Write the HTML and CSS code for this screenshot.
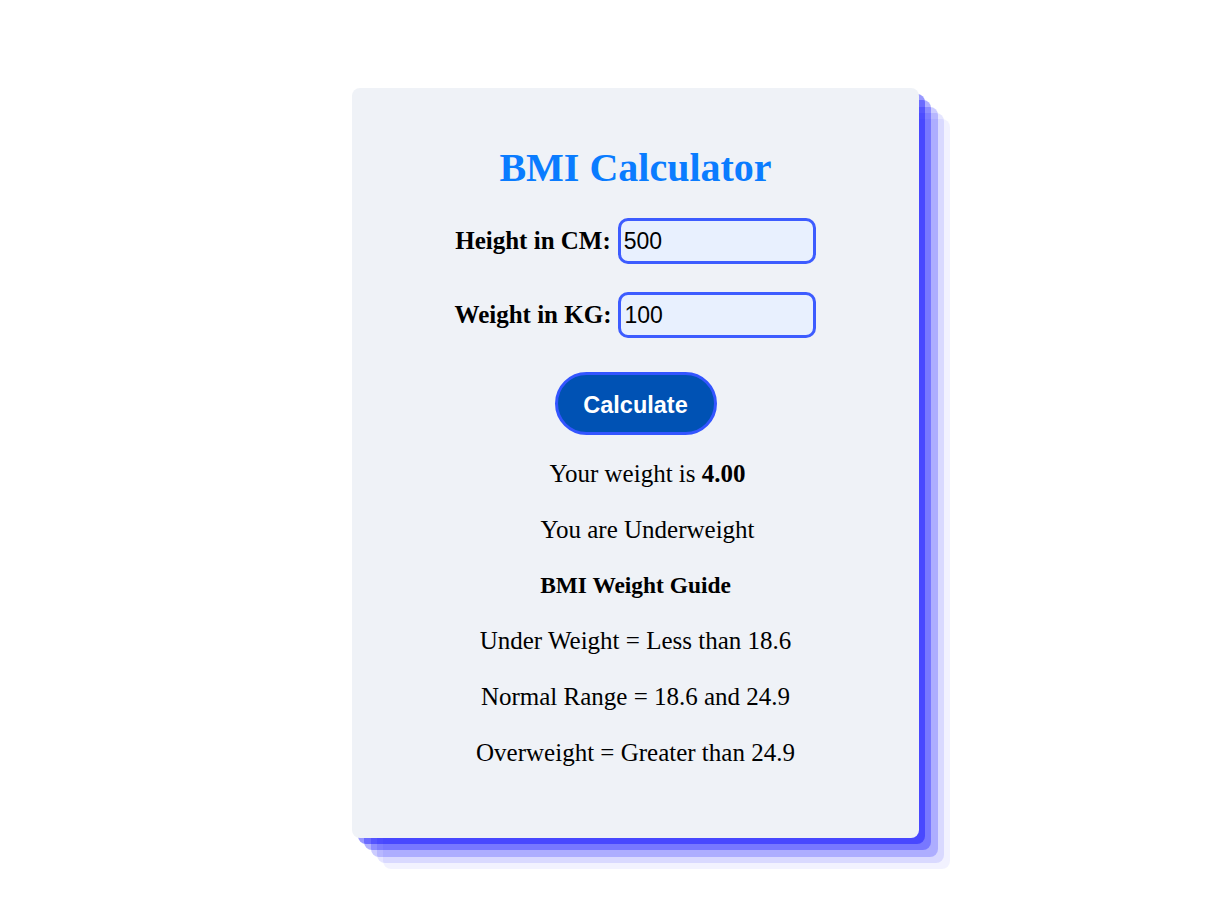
FILE: index.html
```html
<!DOCTYPE html>
<html>
<head>
<meta charset="utf-8">
<link rel="stylesheet" href="styles.css">
<title>BMI Calculator</title>
</head>
<body>
<div class="page">
  <div class="card">
    <h1 class="title">BMI Calculator</h1>
    <div class="row">
      <label class="label" for="h">Height in CM:</label>
      <input class="field" id="h" type="text" value="500">
    </div>
    <div class="row">
      <label class="label" for="w">Weight in KG:</label>
      <input class="field" id="w" type="text" value="100">
    </div>
    <div class="actions">
      <button class="btn" type="button">Calculate</button>
    </div>
    <div class="results">
      <p class="line result">Your weight is <b>4.00</b></p>
      <p class="line result">You are Underweight</p>
      <h3 class="line guide">BMI Weight Guide</h3>
      <p class="line">Under Weight = Less than 18.6</p>
      <p class="line">Normal Range = 18.6 and 24.9</p>
      <p class="line">Overweight = Greater than 24.9</p>
    </div>
  </div>
</div>
</body>
</html>
```
FILE: styles.css
```css
html, body {
  margin: 0;
  padding: 0;
  background: #ffffff;
}
body {
  font-family: "Liberation Serif", "Times New Roman", serif;
  color: #000;
}
.page {
  display: flex;
  justify-content: center;
  padding: 88px 0 40px 40px;
}
.card {
  width: 567px;
  box-sizing: border-box;
  background: #eff2f7;
  border-radius: 8px;
  padding: 57px 0 57px 0;
  display: flex;
  flex-direction: column;
  align-items: center;
  box-shadow:
    rgba(0, 0, 255, 0.4) 6px 6px,
    rgba(0, 0, 255, 0.3) 12px 12px,
    rgba(0, 0, 255, 0.2) 19px 19px,
    rgba(0, 0, 255, 0.1) 25px 25px,
    rgba(0, 0, 255, 0.05) 31px 31px;
}
.title {
  margin: 0;
  font-size: 40px;
  line-height: 46px;
  font-weight: bold;
  color: #0a7cff;
}
.row {
  display: flex;
  align-items: center;
  gap: 7px;
  margin-top: 27px;
}
.row + .row {
  margin-top: 28px;
}
.label {
  font-size: 25px;
  font-weight: bold;
}
.field {
  width: 198px;
  height: 46px;
  box-sizing: border-box;
  border: 3px solid #3d5cff;
  border-radius: 10px;
  background: #e8f0fe;
  font-family: "Liberation Sans", Arial, sans-serif;
  font-size: 23px;
  padding: 0 3px;
  color: #000;
  outline: none;
}
.actions {
  margin-top: 34px;
}
.btn {
  width: 162px;
  height: 63px;
  box-sizing: border-box;
  border: 3px solid #3355ff;
  border-radius: 32px;
  background: #0052b4;
  color: #fff;
  font-family: "Liberation Sans", Arial, sans-serif;
  font-weight: bold;
  font-size: 23.5px;
  padding: 3px 0 0 0;
}
.results {
  margin-top: 11px;
  display: flex;
  flex-direction: column;
  align-items: center;
}
.line {
  margin: 0;
  font-size: 25px;
  font-weight: normal;
  line-height: 55.8px;
  text-align: center;
}
.result {
  padding-left: 24px;
}
.guide {
  font-size: 23.4px;
  font-weight: bold;
}
```
